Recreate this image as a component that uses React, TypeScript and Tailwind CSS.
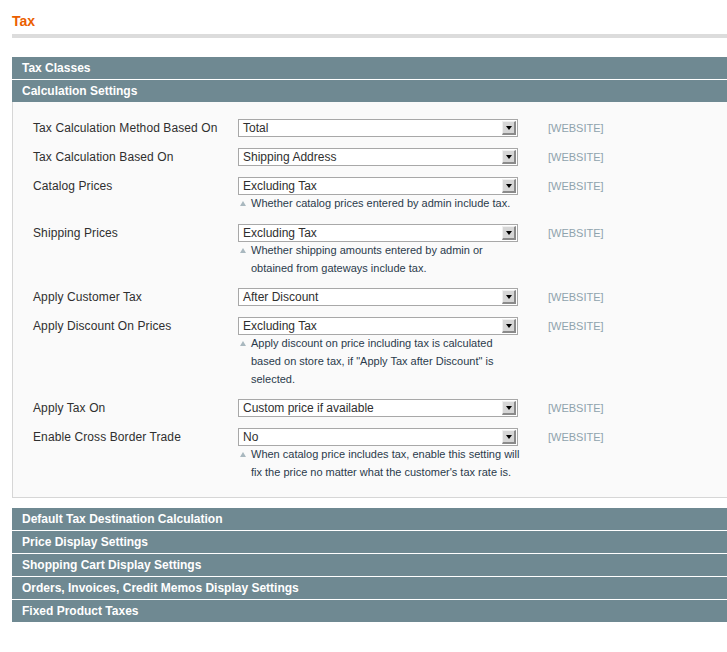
import React from "react";

type Row = {
  label: string;
  value: string;
  comment?: string[];
  pad: string;
};

const rows: Row[] = [
  { label: "Tax Calculation Method Based On", value: "Total", pad: "pt-[6px] pb-[5px]" },
  { label: "Tax Calculation Based On", value: "Shipping Address", pad: "pt-[6px] pb-[5px]" },
  {
    label: "Catalog Prices",
    value: "Excluding Tax",
    comment: ["Whether catalog prices entered by admin include tax."],
    pad: "pt-[6px] pb-[6px]",
  },
  {
    label: "Shipping Prices",
    value: "Excluding Tax",
    comment: [
      "Whether shipping amounts entered by admin or",
      "obtained from gateways include tax.",
    ],
    pad: "pt-[6px] pb-[5px]",
  },
  { label: "Apply Customer Tax", value: "After Discount", pad: "pt-[6px] pb-[5px]" },
  {
    label: "Apply Discount On Prices",
    value: "Excluding Tax",
    comment: [
      "Apply discount on price including tax is calculated",
      'based on store tax, if "Apply Tax after Discount" is',
      "selected.",
    ],
    pad: "pt-[6px] pb-[5px]",
  },
  { label: "Apply Tax On", value: "Custom price if available", pad: "pt-[6px] pb-[5px]" },
  {
    label: "Enable Cross Border Trade",
    value: "No",
    comment: [
      "When catalog price includes tax, enable this setting will",
      "fix the price no matter what the customer's tax rate is.",
    ],
    pad: "pt-[6px] pb-[6px]",
  },
];

const bottomSections = [
  "Default Tax Destination Calculation",
  "Price Display Settings",
  "Shopping Cart Display Settings",
  "Orders, Invoices, Credit Memos Display Settings",
  "Fixed Product Taxes",
];

const SectionHead = ({ title }: { title: string }) => (
  <div className="h-[22px] bg-[#6f8992] px-[10px] text-[12px] font-bold leading-[22px] text-white mb-[1px]">
    {title}
  </div>
);

const FakeSelect = ({ value }: { value: string }) => (
  <div className="flex h-[18px] w-[280px] items-center border border-[#a8a8a8] bg-white pl-[4px] pr-[1px]">
    <span className="flex-1 text-[12px] leading-[16px] text-[#2f2f2f]">{value}</span>
    <div className="flex h-[14px] w-[14px] items-center justify-center border-t border-l border-t-[#f0f0f0] border-l-[#f0f0f0] border-r-2 border-b-2 border-r-[#8a8a8a] border-b-[#8a8a8a] bg-[#d6d6d6]">
      <div className="h-0 w-0 border-x-[3.5px] border-t-[4px] border-x-transparent border-t-black" />
    </div>
  </div>
);

export default function App() {
  return (
    <div className="min-h-screen bg-white font-['Liberation_Sans',Arial,sans-serif]">
      <div className="pl-[12px] pt-[12px]">
        <h3 className="text-[14px] font-bold leading-[18px] text-[#eb5e00]">Tax</h3>
        <div className="mt-[4px] h-[4px] bg-[#dcdcdc]" />

        <div className="mt-[19px]">
          <SectionHead title="Tax Classes" />
          <div className="h-[22px] bg-[#6f8992] px-[10px] text-[12px] font-bold leading-[22px] text-white">
            Calculation Settings
          </div>

          <div className="border-b border-l border-[#d6d6d6] bg-[#fafafa] pl-[20px] pt-[11px] pb-[10px]">
            {rows.map((row, i) => (
              <div key={i} className={`flex ${row.pad}`}>
                <div className="w-[205px] text-[12px] leading-[18px] tracking-[0.1px] text-[#2f2f2f]">
                  {row.label}
                </div>
                <div className="flex w-[280px] flex-col">
                  <FakeSelect value={row.value} />
                  {row.comment && (
                    <div className="-mt-[1px] flex pl-[2px]">
                      <div className="pt-[7px] pr-[5px]">
                        <div className="h-0 w-0 border-x-[3px] border-b-[5px] border-x-transparent border-b-[#a9b8bf]" />
                      </div>
                      <div className="whitespace-nowrap text-[11px] leading-[18px] text-[#2a3a4c]">
                        {row.comment.map((line, j) => (
                          <div key={j}>{line}</div>
                        ))}
                      </div>
                    </div>
                  )}
                </div>
                <div className="ml-[30px] text-[11px] leading-[18px] text-[#8fa3ad]">[WEBSITE]</div>
              </div>
            ))}
          </div>

          <div className="mt-[10px]">
            {bottomSections.map((s) => (
              <SectionHead key={s} title={s} />
            ))}
          </div>
        </div>
      </div>
    </div>
  );
}
